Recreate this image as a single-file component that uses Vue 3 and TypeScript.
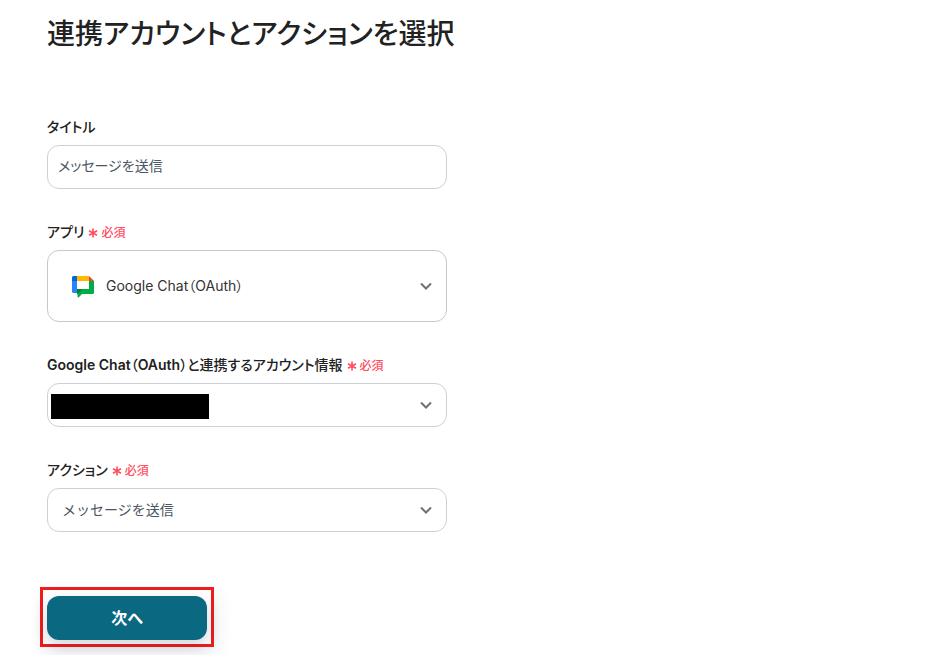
<script setup lang="ts">
import { ref } from 'vue'

const title = ref('メッセージを送信')
const app = ref('Google Chat（OAuth）')
const account = ref('')
const action = ref('メッセージを送信')
</script>

<template>
  <main class="page">
    <h1 class="heading">連携アカウントとアクションを選択</h1>
    <form class="form" @submit.prevent>
      <div class="field">
        <label class="label" for="title">タイトル</label>
        <input id="title" v-model="title" class="control text-input" type="text" />
      </div>

      <div class="field">
        <label class="label" for="app">アプリ<span class="required"><svg class="asterisk" viewBox="0 0 10 10" aria-hidden="true"><path d="M5 .5v9M1 2.7l8 4.6M9 2.7L1 7.3" /></svg>必須</span></label>
        <div class="select-box">
          <svg class="chat-logo" viewBox="0 0 22 22" aria-hidden="true">
            <path fill="#fff" d="M5 5h12v12H5z" />
            <path fill="#0066da" d="M0 1.500C0 .6.6 0 1.500 0H5v5L0 6z" />
            <path fill="#2684fc" d="M0 5h5v12H1.500C.6 17 0 16.400 0 15.500z" />
            <path fill="#ffba00" d="M5 0h12v5H5z" />
            <path fill="#ea4335" d="M17 0l5 5h-5z" />
            <path fill="#00ac47" d="M17 5h5v11.500c0 .9-.6 1.500-1.500 1.500H10l-3.200 3.300c-.5.500-1.300.2-1.300-.5V13H17z" />
            <path fill="#00832d" d="M5 13v5h.5l5-5z" />
          </svg>
          <select id="app" v-model="app" class="control select app-select">
            <option>Google Chat（OAuth）</option>
          </select>
          <svg class="chevron" viewBox="0 0 12 8" aria-hidden="true"><path d="M1 1.500l5 5 5-5" /></svg>
        </div>
      </div>

      <div class="field">
        <label class="label" for="account">Google Chat（OAuth）と連携するアカウント情報<span class="required"><svg class="asterisk" viewBox="0 0 10 10" aria-hidden="true"><path d="M5 .5v9M1 2.7l8 4.6M9 2.7L1 7.3" /></svg>必須</span></label>
        <div class="select-box">
          <select id="account" v-model="account" class="control select">
            <option value=""></option>
          </select>
          <span class="mask"></span>
          <svg class="chevron" viewBox="0 0 12 8" aria-hidden="true"><path d="M1 1.500l5 5 5-5" /></svg>
        </div>
      </div>

      <div class="field">
        <label class="label" for="action">アクション<span class="required"><svg class="asterisk" viewBox="0 0 10 10" aria-hidden="true"><path d="M5 .5v9M1 2.7l8 4.6M9 2.7L1 7.3" /></svg>必須</span></label>
        <div class="select-box">
          <select id="action" v-model="action" class="control select action-select">
            <option>メッセージを送信</option>
          </select>
          <svg class="chevron" viewBox="0 0 12 8" aria-hidden="true"><path d="M1 1.500l5 5 5-5" /></svg>
        </div>
      </div>

      <div class="submit">
        <button class="next" type="submit">次へ</button>
      </div>
    </form>
  </main>
</template>

<style>
body {
  background: #fff;
}
</style>

<style scoped>
.page {
  box-sizing: border-box;
  padding: 12px 47px 8px;
  color: #222;
  font-family: Inter, "Noto Sans CJK JP", sans-serif;
  font-feature-settings: "palt";
}
.heading,
.label {
  font-family: Inter, "Noto Sans CJK JP Medium", "Noto Sans CJK JP", sans-serif;
  font-weight: 600;
}
.heading {
  margin: 0 0 60px;
  font-size: 28px;
  line-height: 44px;
}
.form {
  display: flex;
  flex-direction: column;
  gap: 32px;
  max-width: 400px;
}
.field {
  display: flex;
  flex-direction: column;
  gap: 8px;
}
.label {
  display: flex;
  align-items: center;
  height: 21px;
  font-size: 14px;
  line-height: 21px;
}
.required {
  display: inline-flex;
  align-items: center;
  gap: 3px;
  margin-left: 4px;
  padding-top: 2px;
  color: #ff4d5e;
  font-size: 12px;
}
.asterisk {
  width: 10px;
  height: 10px;
  fill: none;
  stroke: currentColor;
  stroke-width: 1.6;
}
.control {
  box-sizing: border-box;
  width: 100%;
  height: 44px;
  margin: 0;
  border: 1px solid #ccd0d8;
  border-radius: 12px;
  background: #fff;
  color: #4b5563;
  font: inherit;
  font-feature-settings: inherit;
  font-size: 14px;
}
.text-input {
  padding: 0 10px 4px;
}
.select-box {
  position: relative;
}
.select {
  display: block;
  appearance: none;
  padding: 0 40px 2px 14px;
}
.app-select {
  height: 72px;
  padding-left: 58px;
  border-color: #c8c8c8;
  color: #333;
}
.action-select {
  font-feature-settings: normal;
}
.chat-logo {
  position: absolute;
  top: 26px;
  left: 25px;
  width: 22px;
  height: 22px;
}
.chevron {
  position: absolute;
  top: calc(50% - 4px);
  right: 15px;
  width: 12px;
  height: 8px;
  fill: none;
  stroke: #707070;
  stroke-width: 2;
  pointer-events: none;
}
.mask {
  position: absolute;
  top: 11px;
  left: 4px;
  width: 158px;
  height: 25px;
  background: #000;
  pointer-events: none;
}
.submit {
  align-self: flex-start;
  margin: 23px 0 0 -7px;
  padding: 6px 4px 4px;
  border: 3px solid #ee1c1c;
  box-shadow: 4px 6px 16px rgba(30, 40, 70, 0.07);
}
.next {
  display: block;
  width: 160px;
  height: 44px;
  padding: 0 0 2px;
  border: 0;
  border-radius: 12px;
  background: #0a6881;
  box-shadow: 0 6px 16px rgba(30, 40, 70, 0.2);
  color: #fff;
  font: inherit;
  font-feature-settings: inherit;
  font-size: 16px;
  font-weight: 700;
}
</style>
